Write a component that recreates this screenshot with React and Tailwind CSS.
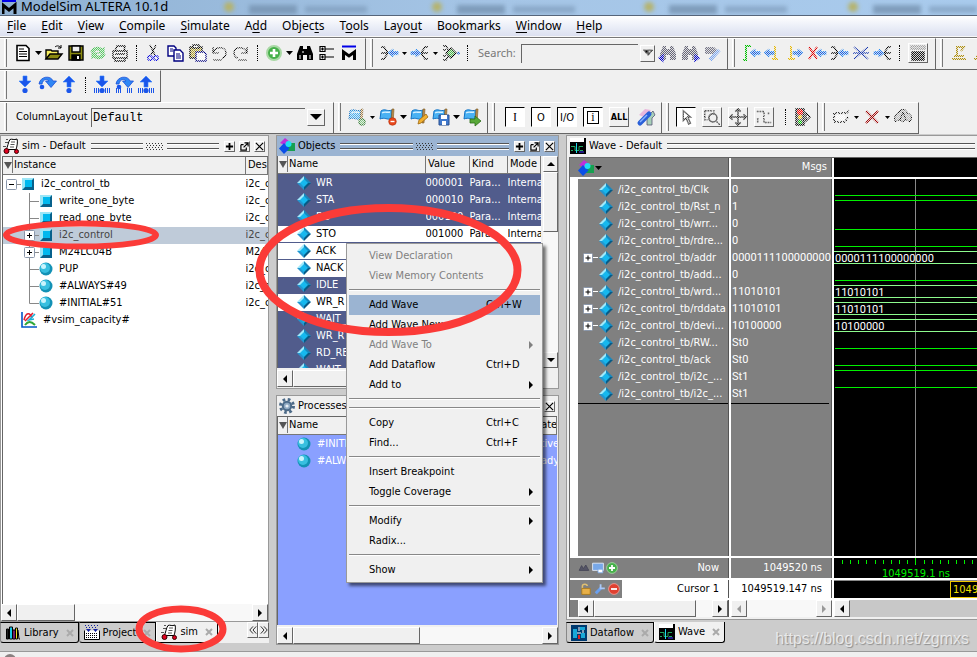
import React, { useState } from 'react';
import clsx from 'clsx';

const BLUE = '#1a5fe0';

/* 20x20 toolbar glyph, dim = disabled (dithered) */
const Ico = ({ children, dim, size = 'size-5' }) => (
  <svg viewBox="0 0 20 20" className={clsx(size, 'shrink-0')} fill="none" stroke="#000" strokeWidth="1.4">
    <g mask={dim ? 'url(#dither)' : undefined}>{children}</g>
  </svg>
);

const Tool = ({ name, children, dim }) => (
  <button type="button" aria-label={name} className="flex w-[22px] shrink-0 items-center justify-center">
    <Ico dim={dim}>{children}</Ico>
  </button>
);

const Drop = ({ small }) => (
  <span className="flex w-[9px] shrink-0 justify-center">
    <svg viewBox="0 0 7 4" className={small ? 'h-[3px] w-[5px]' : 'h-1 w-[7px]'}>
      <path d="M0 0h7L3.5 4z" fill="#000" />
    </svg>
  </span>
);

const Sep = () => <span className="mx-[5px] h-4 shrink-0 border-l border-dotted border-black" />;

const Group = ({ children, className }) => (
  <div className={clsx('flex h-8 shrink-0 items-center border-r border-b border-r-[#666] border-b-[#666] border-t border-t-white pb-0.5 pl-1', className)}>
    <span className="mr-[5px] h-7 w-[3px] shrink-0 border-r border-l border-r-[#777] border-l-white" />
    {children}
  </div>
);

const Square = ({ name, children, down }) => (
  <button
    type="button"
    aria-label={name}
    className={clsx(
      'mr-1.5 flex size-5 shrink-0 items-center justify-center border text-[11px] leading-none',
      down ? 'border-t-black border-l-black border-r-white border-b-white bg-white' : 'border-t-white border-l-white border-r-[#666] border-b-[#666] bg-[#f0f0f0]'
    )}
  >
    {children}
  </button>
);

/* shapes used more than once */
const Arrow = ({ d = 'l', x = 0, y = 0 }) => (
  <path
    transform={`translate(${x} ${y})`}
    d={d === 'l' ? 'M0 4l5-4v2.6h5v3H5V8z' : 'M10 4L5 0v2.6H0v3h5V8z'}
    fill={BLUE}
    stroke="#2f8ff5"
    strokeWidth="1"
  />
);
const Down = () => <path d="M8 1h4v5h4l-6 6-6-6h4z" fill="#1b56ea" stroke="#2f80ff" strokeWidth=".6" />;
const Up = () => <path d="M10 1l6 6h-4v5H8V7H4z" fill="#1b56ea" stroke="#2f80ff" strokeWidth=".6" />;
const Over = () => (
  <g>
    <path d="M2 9C3 1 14 0 16 6h3.500L14 12.500 8.500 6H12C10 3.500 6 4 5 9z" fill="#2f86f4" stroke="#1b4fd8" strokeWidth=".8" />
    <circle cx="5" cy="12" r="2.300" fill="#1b56ea" stroke="none" />
  </g>
);
const Ticks = () => <path d="M2.500 13v5M4.500 13v5M6.500 13v5M13.500 13v5M15.500 13v5M17.500 13v5" stroke="#1b56ea" strokeWidth="1" />;
const Ball = () => <circle cx="10" cy="15.500" r="2.600" fill="#1b56ea" stroke="none" />;
const Flag = () => (
  <g>
    <path d="M3 4c4-3 6 1 11-1l-1 9c-4 1-6-2-11 0z" fill="#49b1f3" stroke="#1272c4" strokeWidth="1" />
    <path d="M4 6c3-2 5 0 8-1" stroke="#d9f1ff" />
    <path d="M14 2h2l-1 14h-2z" fill="#b98b4a" stroke="#7d5a24" strokeWidth=".6" />
  </g>
);
const Binoc = ({ c = '#000' }) => (
  <path d="M5 3h3v3h4V3h3l3 8v6h-6v-5H8v5H2v-6z" fill={c} stroke="none" />
);

const Cube = () => (
  <svg viewBox="0 0 12 12" className="size-3 shrink-0">
    <path d="M0 0h12v12H0z" fill="#9be6f7" />
    <path d="M12 0v12H0l3-3h6V3z" fill="#07618c" />
    <path d="M3 2h7v7H3z" fill="#00b8ee" />
  </svg>
);
const Sphere = () => (
  <svg viewBox="0 0 14 14" className="size-3.5 shrink-0">
    <circle cx="7" cy="7" r="6.500" fill="#1391b5" />
    <circle cx="6" cy="6" r="5" fill="#38bfe0" />
    <circle cx="4.500" cy="4.500" r="2.500" fill="#c9f4fd" />
  </svg>
);
const Diamond = () => (
  <svg viewBox="0 0 16 16" className="size-4 shrink-0">
    <path d="M8 1L1 8h7z" fill="#9fe9fb" />
    <path d="M8 1l7 7H8z" fill="#1787bd" />
    <path d="M1 8l7 7V8z" fill="#2396d0" />
    <path d="M15 8l-7 7V8z" fill="#075b86" />
    <path d="M8 4L12 8 8 12 4 8z" fill="#16b8ee" />
  </svg>
);
const Shapes = () => (
  <svg viewBox="0 0 16 16" className="size-4 shrink-0">
    <path d="M1 5l5-5 5 4-3 4z" fill="#c030d8" />
    <path d="M8 5h8v8H8z" fill="#17a050" />
    <path d="M5 5l5.500 5.500L5 16l-5-5.500z" fill="#0b4fe8" />
    <circle cx="9.500" cy="6" r="3" fill="#1fe0f4" />
  </svg>
);
const SimIcon = () => (
  <svg viewBox="0 0 16 16" className="size-4 shrink-0">
    <path d="M7 1.500c2-1 4 1 7-.5 1 2 0 8-1 10.500H3C5 9 5 4 7 1.500z" fill="#fff" stroke="#000" />
    <path d="M8 4h4M7.500 6.500h4M7 9h4M2 4.500h3M3 1.500h2M0 8.500h3" stroke="#555" />
    <circle cx="3.500" cy="13" r="2.500" fill="#e00020" stroke="#300" />
    <circle cx="13.500" cy="13.500" r="2" fill="#e00020" stroke="#300" />
  </svg>
);
const WaveIcon = () => (
  <svg viewBox="0 0 16 16" className="size-4 shrink-0">
    <path d="M0 0h16v16H0z" fill="#000" />
    <path d="M0 0h14v4H0z" fill="#fff" />
    <path d="M1 8.500h4v4h4v-4h4M1 12.500h2M10 12.500h3" fill="none" stroke="#20a860" />
    <path d="M6.500 5v10" stroke="#20d8f0" />
    <path d="M9 14h5" stroke="#4030ff" />
  </svg>
);
const FlowIcon = () => (
  <svg viewBox="0 0 16 16" className="size-4 shrink-0">
    <path d="M0 0h16v16H0z" fill="#003a70" />
    <path d="M2 4h4v9H2zM9 2h5v3H9zM10 8h4v5h-4z" fill="#18a8d8" />
    <path d="M6 8h4M8 2v4M12 5v3" stroke="#fff" />
    <path d="M7 10h2v4H7z" fill="#e02020" />
  </svg>
);
const BooksIcon = () => (
  <svg viewBox="0 0 16 16" className="size-4 shrink-0" stroke="#000" strokeWidth="1">
    <path d="M1.500 4v10h2V4z" fill="#222" />
    <path d="M4.500 2v12h3V2z" fill="#18c8e8" />
    <path d="M8 5v9h2V5z" fill="#e838c8" />
    <path d="M10.500 3v11h2V3z" fill="#f0e020" />
    <path d="M13 5l1 9h1" fill="none" />
  </svg>
);
const ProjectIcon = () => (
  <svg viewBox="0 0 16 16" className="size-4 shrink-0">
    <path d="M.5 5.500v9h15v-9" fill="#fff" stroke="#000" />
    <path d="M2 8.500h12M2 10.500h12M2 12.500h12" stroke="#000" strokeDasharray="1 1" />
    <path d="M2 4h5L4.500 7zM9 4h5l-2.500 3z" fill="#1020a0" />
    <path d="M1 .5h14M2 2.500h12" stroke="#1020a0" strokeDasharray="1 2" />
  </svg>
);
const GearIcon = () => (
  <svg viewBox="0 0 16 16" className="size-4 shrink-0">
    <circle cx="8" cy="8" r="6.500" fill="none" stroke="#4c6a88" strokeWidth="3" strokeDasharray="2.600 2.500" />
    <circle cx="8" cy="8" r="4.200" fill="#8fa9c2" stroke="#4c6a88" strokeWidth="2" />
    <circle cx="8" cy="8" r="1.600" fill="#e8eef4" />
  </svg>
);

const Plus = () => (
  <svg viewBox="0 0 10 10" className="size-2.5 shrink-0">
    <rect x=".5" y=".5" width="9" height="9" rx="1" fill="#fff" stroke="#8a97ab" />
    <path d="M2.500 5h5M5 2.500v5" stroke="#000" />
  </svg>
);

/* tree connector with an optional expand box */
const Branch = ({ box, root, last }) => (
  <svg viewBox="0 0 17 17" className="size-[17px] shrink-0" fill="none" stroke="#888">
    {!root && <path d={last ? 'M7.500 0v8.500' : 'M7.500 0v17'} />}
    <path d="M7.500 8.500H17" />
    {box && (
      <>
        <rect x="2.500" y="3.500" width="10" height="10" rx="1" fill="#fff" stroke="#8a97ab" />
        <path d={root ? 'M5 8.500h5' : 'M5 8.500h5M7.500 6v5'} stroke="#000" />
      </>
    )}
  </svg>
);

const raised = 'flex shrink-0 items-center justify-center border border-t-white border-l-white border-r-[#666] border-b-[#666] bg-[#f0f0f0]';

const Tri = ({ d, color = '#000' }) => (
  <svg viewBox="0 0 8 8" className="size-2">
    <path d={{ l: 'M6 0v8L2 4z', r: 'M2 0v8l4-4z', u: 'M0 6h8L4 2z', d: 'M0 2h8L4 6z', h: 'M0 1h8L4 8z' }[d]} fill={color} />
  </svg>
);

const HScroll = ({ thumb, off, plain }) => (
  <div className={clsx('flex h-[17px] shrink-0', plain ? 'bg-[#c8c8c8]' : 'bg-[#f8f8f8]')}>
    <button type="button" aria-label="Scroll left" className={clsx(raised, 'w-4')}><Tri d="l" color={off ? '#999' : '#000'} /></button>
    <div className="flex min-w-0 flex-1">
      {thumb && <div className={clsx(raised, thumb)} />}
    </div>
    {!plain && (
      <button type="button" aria-label="Scroll right" className={clsx(raised, 'w-4')}><Tri d="r" color={off ? '#999' : '#000'} /></button>
    )}
  </div>
);

const PanelTitle = ({ icon, title, active, buttons = true }) => (
  <div className={clsx('flex h-5 shrink-0 items-center gap-[3px] pr-0.5 pl-0.5', active ? 'bg-[#9bb4d2]' : 'bg-[#f0f0f0]')}>
    {icon}
    <h2 className="whitespace-nowrap">{title}</h2>
    <div className="ml-0.5 h-1.5 min-w-0 flex-1 border-y border-[#555] shadow-[0_1px_0_#fff,inset_0_1px_0_#fff]" />
    {buttons && (
      <>
        <svg viewBox="0 0 18 7" className="h-[7px] w-[18px] shrink-0">
          <path d="M0 .5h18M1 2.500h18M0 4.500h18M1 6.500h18" stroke="#333" strokeDasharray="1 2" />
        </svg>
        <div className="mr-0.5 h-1.5 min-w-0 flex-1 border-y border-[#555] shadow-[0_1px_0_#fff,inset_0_1px_0_#fff]" />
        {['M5 1v8M1 5h8', 'M1 3v6h6V6M1 3h3M4 6l4.500-4.500M5 1h4v4', 'M1 1l8 8M9 1L1 9'].map((d, i) => (
          <button key={i} type="button" aria-label={['Zoom', 'Undock', 'Close'][i]} className={clsx(raised, 'mr-px size-[11px]')}>
            <svg viewBox="0 0 10 10" className="size-[9px]"><path d={d} fill="none" stroke="#000" strokeWidth={i ? 1.3 : 2} /></svg>
          </button>
        ))}
      </>
    )}
  </div>
);

const th = 'h-[17px] overflow-hidden border-r border-b border-[#777] bg-[#f0f0f0] p-0 pl-0.5 text-left font-normal whitespace-nowrap';
const td = 'h-[17px] overflow-hidden p-0 whitespace-nowrap leading-4';

const NameHead = ({ children }) => (
  <th className="h-[17px] overflow-hidden border-r border-b border-[#777] bg-[#f0f0f0] p-0 text-left font-normal whitespace-nowrap">
    <span className="flex items-center gap-px">
      <span className="flex h-4 w-2.5 shrink-0 items-center justify-center border-r border-[#777]"><Tri d="h" color="#555" /></span>
      {children}
    </span>
  </th>
);

const menus = [
  ['', 'F', 'ile'], ['', 'E', 'dit'], ['', 'V', 'iew'], ['', 'C', 'ompile'], ['', 'S', 'imulate'], ['A', 'd', 'd'],
  ['Objec', 't', 's'], ['T', 'o', 'ols'], ['Layo', 'u', 't'], ['Boo', 'k', 'marks'], ['', 'W', 'indow'], ['', 'H', 'elp'],
];

const tree = [
  { name: 'i2c_control_tb', unit: 'i2c_control_tb', root: true, box: true, icon: <Cube /> },
  { name: 'write_one_byte', unit: 'i2c_control_tb', icon: <Cube /> },
  { name: 'read_one_byte', unit: 'i2c_control_tb', icon: <Cube /> },
  { name: 'i2c_control', unit: 'i2c_control', box: true, icon: <Cube />, sel: true },
  { name: 'M24LC04B', unit: 'M24LC04B', box: true, icon: <Cube /> },
  { name: 'PUP', unit: 'i2c_control_tb', icon: <Sphere /> },
  { name: '#ALWAYS#49', unit: 'i2c_control_tb', icon: <Sphere /> },
  { name: '#INITIAL#51', unit: 'i2c_control_tb', icon: <Sphere />, last: true },
];

const objects = [
  ['WR', '000001'], ['STA', '000010'], ['RD', '000100'], ['STO', '001000', 1], ['ACK', '', 1], ['NACK', '', 1],
  ['IDLE', ''], ['WR_R', '', 1], ['WAIT_', ''], ['WR_R', ''], ['RD_RE', ''], ['WAIT_', ''],
];

const signals = [
  ['/i2c_control_tb/Clk', '0', 'lo'],
  ['/i2c_control_tb/Rst_n', '1', 'hi'],
  ['/i2c_control_tb/wrr...', '0', 'lo'],
  ['/i2c_control_tb/rdre...', '0', 'lo'],
  ['/i2c_control_tb/addr', '0000111100000000', 'bus'],
  ['/i2c_control_tb/add...', '0', 'lo'],
  ['/i2c_control_tb/wrd...', '11010101', 'bus'],
  ['/i2c_control_tb/rddata', '11010101', 'bus'],
  ['/i2c_control_tb/devi...', '10100000', 'bus'],
  ['/i2c_control_tb/RW...', 'St0', 'lo'],
  ['/i2c_control_tb/ack', 'St0', 'lo'],
  ['/i2c_control_tb/i2c_...', 'St1', 'hi'],
  ['/i2c_control_tb/i2c_...', 'St1', 'hi'],
];

const contextMenu = [
  { t: 'View Declaration', off: true }, { t: 'View Memory Contents', off: true }, null,
  { t: 'Add Wave', k: 'Ctrl+W' }, { t: 'Add Wave New' }, { t: 'Add Wave To', off: true, sub: true },
  { t: 'Add Dataflow', k: 'Ctrl+D' }, { t: 'Add to', sub: true }, null, null,
  { t: 'Copy', k: 'Ctrl+C' }, { t: 'Find...', k: 'Ctrl+F' }, null,
  { t: 'Insert Breakpoint' }, { t: 'Toggle Coverage', sub: true }, null,
  { t: 'Modify', sub: true }, { t: 'Radix...' }, null,
  { t: 'Show', sub: true },
];

const TitleBar = () => (
  <header className="relative flex h-4 shrink-0 items-center overflow-hidden border-b border-[#56657a] bg-linear-to-r from-[#8fb1d3] via-[#a5c5e6] to-[#a9cbed]">
    <svg className="absolute inset-0 size-full blur-[2px]" aria-hidden="true">
      {[229, 437, 649, 853].map((x) => (
        <g key={x}>
          <circle cx={x} cy="7" r="5" fill="#b5b36c" />
          <rect x={x + 20} y="5" width="48" height="9" fill="#7592b0" opacity=".8" />
          <rect x={x + 76} y="6" width="62" height="7" fill="#7592b0" opacity=".55" />
        </g>
      ))}
    </svg>
    <svg viewBox="0 0 16 16" className="relative ml-0.5 size-4 shrink-0">
      <path d="M0 0h14v2H0z" fill="#0000e8" />
      <path d="M1 14V5l6 5 6-5v9" fill="none" stroke="#000" strokeWidth="3" />
    </svg>
    <h1 className="relative -mt-1 ml-[3px] text-[13px] leading-4 font-['Noto_Sans',sans-serif]">ModelSim ALTERA 10.1d</h1>
  </header>
);

const Toolbars = () => (
  <div className="shrink-0 border-t border-[#777] bg-[#f0f0f0]">
    <div className="flex overflow-hidden">
      <Group className="pr-[5px]">
        <Tool name="New">
          <path d="M4 2.500h9l3 3v12H4z" fill="#fff" strokeWidth="1.600" />
          <path d="M6 6h5M6 8.500h8M6 11h8M6 13.500h8" strokeWidth="1" />
        </Tool>
        <Drop />
        <Tool name="Open">
          <path d="M2 16V7h5l1 1h6v3" fill="#f8f060" /><path d="M2 16l4-5h12l-4 5z" fill="#8a8a10" /><path d="M11 4c2-2 5-1 6 1m0-3v3h-3" strokeWidth="1" />
        </Tool>
        <Tool name="Save">
          <path d="M3 3h14v14H3z" fill="#8a8a10" /><path d="M6 3h8v6H6z" fill="#f0f0f0" /><path d="M6 12h8v5H6z" fill="#000" /><path d="M11 13h2v3h-2z" fill="#fff" stroke="none" />
        </Tool>
        <Tool name="Reload" dim>
          <path d="M3 9c1-5 8-6 11-3l2-2v6h-6l2-2c-3-2-5-1-6 1zM17 11c-1 5-8 6-11 3l-2 2v-6h6l-2 2c3 2 5 1 6-1z" fill="#5fd06a" stroke="#4cc058" strokeWidth="1" />
        </Tool>
        <Tool name="Print" dim>
          <path d="M5 8l2-5h8l-1 5M3 8h14v7H3zM5 15v3h10v-3M5 11h10" />
        </Tool>
        <Sep />
        <Tool name="Cut" dim>
          <path d="M7 2l5 10M13 2L8 12" /><circle cx="7" cy="15" r="2.200" stroke="#0000e0" /><circle cx="13" cy="15" r="2.200" stroke="#0000e0" />
        </Tool>
        <Tool name="Copy">
          <path d="M3 3h6l2 2v8H3z" fill="#fff" stroke="#000080" /><path d="M9 7h6l3 3v8H9z" fill="#fff" stroke="#000080" /><path d="M5 6h3M5 8h3M11 11h4M11 13h5M11 15h5" stroke="#000080" strokeWidth="1" />
        </Tool>
        <Tool name="Paste" dim>
          <path d="M3 4h12v11H3z" fill="#b0a030" /><path d="M6 2h6v3H6z" fill="#fff" /><path d="M9 9h8l2 2v7H9z" fill="#fff" stroke="#000080" />
        </Tool>
        <Tool name="Undo" dim><path d="M4 4v6h6M4 10c2-7 13-7 13 0 0 3-2 5-4 5M4 17h9" strokeWidth="1.200" /></Tool>
        <Tool name="Redo" dim><path d="M16 4v6h-6M16 10C14 3 3 3 3 10c0 3 2 5 4 5M7 17h9" strokeWidth="1.200" /></Tool>
        <Sep />
        <Tool name="Add">
          <circle cx="10" cy="10" r="7" fill="#46b04a" stroke="#a8d8a4" strokeWidth="2" /><path d="M10 6v8M6 10h8" stroke="#fff" strokeWidth="2.600" />
        </Tool>
        <Drop />
        <Tool name="Find"><Binoc /><path d="M5 12v4M15 12v4M8 8v2" stroke="#fff" strokeWidth="1" /></Tool>
        <Tool name="Collapse all">
          <path d="M3 3.500h5v5H3zM3 11.500h5v5H3zM4 6h3M5.500 4.500v3M4 14h3M5.500 12.500v3M8 6h9M8 14h9" strokeWidth="1.200" />
        </Tool>
        <Tool name="ModelSim"><path d="M3 3.500h14" stroke="#0000e8" strokeWidth="2" /><path d="M4.500 17V9l5.500 4 5.500-4v8" strokeWidth="3" /></Tool>
      </Group>
      <Group className="pr-1">
        <Tool name="Collapse time" dim><path d="M2 4h3l4 6-4 6H2M2 10h7" /><Arrow x={9} y={6} /></Tool>
        <Drop small />
        <Tool name="Expand time" dim><path d="M18 4h-3l-4 6 4 6h3M18 10h-7" /><Arrow d="r" x={1} y={6} /></Tool>
        <Drop small />
        <Tool name="Expand all time" dim><path d="M2 3h3l4 7-4 7H2M2 7h3M2 13h3" /><path d="M5 10l5-5 5 5-5 5z" fill="#48b848" strokeWidth="1.400" /><circle cx="17.500" cy="10" r="1.500" fill={BLUE} stroke="none" /></Tool>
        <Sep />
        <label htmlFor="search" className="ml-[5px] w-[43px] shrink-0 text-[11px] text-[#777] font-['Noto_Sans',sans-serif]">Search:</label>
        <input id="search" className="h-[19px] w-[117px] border-t border-l border-[#666] bg-[#f0f0f0] px-1 outline-none" />
        <button type="button" aria-label="Search history" className={clsx(raised, 'mr-0.5 ml-0.5 h-[17px] w-[15px]')}>
          <Ico dim size="size-3"><path d="M2 5h16l-8 9z" fill="#000" /></Ico>
        </button>
        <Tool name="Find previous" dim><Binoc c="#667" /><path d="M1 15l4-3v6z" fill="#00c" stroke="#00c" /></Tool>
        <Tool name="Find next" dim><Binoc c="#667" /><path d="M19 15l-4-3v6z" fill="#00c" stroke="#00c" /></Tool>
        <Tool name="Search options" dim><path d="M3 4h9l3 3v4H3z" fill="#778" stroke="none" /><path d="M8 17l9-10" stroke="#7aa6f0" strokeWidth="4" /></Tool>
      </Group>
      <Group className="pr-1">
        <Tool name="Insert edge" dim><path d="M2 17h3V3h5" stroke="#00c000" strokeWidth="2" /><Arrow x={9} y={6} /></Tool>
        <Tool name="Previous falling edge" dim><path d="M12 3v13h-3h6" stroke="#e8b800" strokeWidth="2" /><Arrow x={1} y={6} /></Tool>
        <Tool name="Next falling edge" dim><path d="M6 3v13H3h7" stroke="#e8b800" strokeWidth="2" /><Arrow d="r" x={8} y={6} /></Tool>
        <Tool name="Delete cursor" dim><path d="M2 4l8 12M10 4L2 16" stroke="#e00000" strokeWidth="2" /><Arrow x={9} y={6} /></Tool>
        <Tool name="Previous" dim><path d="M2 4h3l4 6-4 6H2M2 10h7" /><Arrow x={9} y={6} /></Tool>
        <Tool name="Both" dim><path d="M3 4l7 6-7 6M17 4l-7 6 7 6M2 10h16" stroke="#1838b0" strokeWidth="1.600" /></Tool>
        <Tool name="Next" dim><path d="M18 4h-3l-4 6 4 6h3M18 10h-7" /><Arrow d="r" x={1} y={6} /></Tool>
        <Sep />
        <button type="button" aria-label="Memory" className={clsx(raised, 'mx-[3px] size-5')}>
          <Ico dim><path d="M3 3h14v3H3z" fill="#bbb" stroke="#999" /><path d="M4 9h12v8H4z" fill="#222" /></Ico>
        </button>
      </Group>
      <Group className="flex-1">
        <Tool name="Step up" dim><path d="M3 16h14M5 13h10M8 3v10M8 4h7l-3 4" stroke="#b09010" strokeWidth="2" /></Tool>
        <Tool name="Step down" dim><path d="M3 16h14M5 13h10M8 3v10" stroke="#b09010" strokeWidth="2" /></Tool>
      </Group>
    </div>
    <div className="flex">
      <Group className="pr-[3px]">
        <span className="w-0.5" />
        <Tool name="Step"><Down /><Ball /></Tool>
        <Tool name="Step over"><Over /></Tool>
        <Tool name="Step out"><Up /><Ball /></Tool>
        <Sep />
        <Tool name="Step current"><Down /><Ball /><Ticks /></Tool>
        <Tool name="Step over current"><Over /><Ticks /></Tool>
        <Tool name="Step out current"><Up /><Ball /><Ticks /></Tool>
      </Group>
    </div>
    <div className="flex overflow-hidden">
      <Group className="w-[334px] pr-2">
        <label htmlFor="layout" className="ml-1 w-[75px] shrink-0">ColumnLayout</label>
        <select id="layout" className="h-[19px] min-w-0 flex-1 appearance-none border-t border-l border-[#666] bg-[#f0f0f0] pl-px text-[12px] font-['Liberation_Mono',monospace] outline-none">
          <option>Default</option>
        </select>
        <button type="button" aria-label="Column layouts" className={clsx(raised, 'ml-0.5 h-[17px] w-[18px]')}>
          <svg viewBox="0 0 12 6" className="h-1.5 w-3"><path d="M0 0h12L6 6z" /></svg>
        </button>
      </Group>
      <Group className="pr-1">
        <Tool name="Bookmark add" dim><Flag /><circle cx="15" cy="15" r="3" fill="#8c8" stroke="#484" /></Tool>
        <Drop small />
        <Tool name="Bookmark delete"><Flag /><circle cx="14.500" cy="14.500" r="3.800" fill="#e8481c" stroke="#b02c08" strokeWidth=".6" /><path d="M12.500 14.500h4" stroke="#fff" /></Tool>
        <Drop />
        <Tool name="Bookmark edit"><Flag /><path d="M9 17l1-4 7-6 2 3-7 6z" fill="#f0b030" stroke="#a06810" strokeWidth=".8" /></Tool>
        <Tool name="Bookmark save"><Flag /><path d="M8 8h10v10H8z" fill="#3f78cc" stroke="#2a5090" strokeWidth="1" /><path d="M10 8h6v4h-6zM11 14h4v4h-4z" fill="#fff" stroke="none" /></Tool>
        <Drop />
        <Tool name="Bookmark go"><Flag /><path d="M8 12h5V9l6 5-6 5v-3H8z" fill="#58a838" stroke="#2c6c18" strokeWidth=".8" /></Tool>
      </Group>
      <Group className="pr-1">
        <span className="w-[5px]" />
        <Square name="Inputs" down><span className="font-['Liberation_Serif',serif] text-[12px]">I</span></Square>
        <Square name="Outputs" down>O</Square>
        <Square name="Inouts" down>I/O</Square>
        <Square name="Internal" down><span className="border border-black px-[3px] font-['Liberation_Serif',serif] text-[12px] leading-[11px]">i</span></Square>
        <Square name="All"><b className="text-[9px]">ALL</b></Square>
        <Tool name="Preferences"><path d="M3 8l6-6 6 1-5 8z" fill="#eab8dc" stroke="none" /><path d="M12 9l5-5 2 4-3 3v7h-5v-7z" fill="#a8d0b8" stroke="#557" strokeWidth=".8" /><path d="M4 16l9-9" stroke="#2a60d8" strokeWidth="5" strokeLinecap="round" /><path d="M4 15l7-7" stroke="#8ab4ff" strokeWidth="1.500" /></Tool>
      </Group>
      <Group className="pr-1">
        <span className="w-0.5" />
        <Square name="Select mode" down><Ico dim size="size-[18px]"><path d="M7 3v11l3-3 3 7 2-1-3-7h3z" strokeWidth="1.500" /></Ico></Square>
        <Square name="Zoom mode"><Ico dim size="size-[18px]"><path d="M2 3h10v3M2 3v10h3M15 15l4 4" strokeWidth="1.700" strokeDasharray="2 1" /><circle cx="11" cy="11" r="4.500" strokeWidth="1.700" /></Ico></Square>
        <Square name="Pan mode"><Ico dim size="size-[18px]"><path d="M10 1v18M1 10h18M7 4l3-3 3 3M7 16l3 3 3-3M4 7l-3 3 3 3M16 7l3 3-3 3" strokeWidth="1.700" /></Ico></Square>
        <Square name="Edit mode"><Ico dim size="size-[18px]"><path d="M2 4h8v12h8M3 11v5M15 5v3" strokeWidth="1.700" strokeDasharray="2 1" /></Ico></Square>
        <Sep />
        <Tool name="Stop drawing" dim><path d="M4 2h8v16H4z" fill="#555" /><circle cx="8" cy="5" r="3" fill="#f00" stroke="none" /><circle cx="8" cy="10" r="2" fill="#fc0" stroke="none" /><circle cx="8" cy="15" r="2" fill="#0c0" stroke="none" /><path d="M14 6l4 4-4 4z" strokeWidth="1.400" /></Tool>
      </Group>
      <Group className="pr-1">
        <Tool name="Edit row" dim><path d="M4 6h12l2-3M3 6v9h11l3-5" strokeWidth="1.600" strokeDasharray="2 1" /><path d="M5 8h9v5H5z" fill="#fff" stroke="none" /></Tool>
        <Drop small />
        <Tool name="Remove" dim><path d="M4 4l12 12M16 4L4 16" stroke="#a00000" strokeWidth="2.400" /></Tool>
        <Drop small />
        <Tool name="Coverage" dim><path d="M6 5c2-4 8-3 8 1 5 1 6 6 2 9-2-3-5-3-6 0-3-3-6-2-7 0-3-3-1-8 3-10z" fill="#bbb" strokeWidth="1" /><path d="M7 13l3-8 3 8" strokeWidth="1" /></Tool>
      </Group>
    </div>
  </div>
);

const Tabs = ({ tabs, current, onPick, children }) => (
  <div role="tablist" className="flex h-[21px] shrink-0">
    {tabs.map((t) => (
      <button
        key={t.name}
        type="button"
        role="tab"
        aria-selected={t.name === current}
        onClick={() => onPick(t.name)}
        className={clsx(
          'flex items-center gap-[3px] rounded-b-[3px] border-r border-b border-l border-black px-1 whitespace-nowrap',
          t.name === current ? 'bg-[#f0f0f0] border-l-white' : 'border-t border-l-[#888] bg-[#ccc]'
        )}
      >
        {t.icon}
        {t.name}
        <svg viewBox="0 0 8 8" className="ml-1 size-2"><path d="M1 1l6 6M7 1L1 7" stroke="#aaa" strokeWidth="2" /></svg>
      </button>
    ))}
    {children}
  </div>
);

const SimPane = () => {
  const [tab, setTab] = useState('sim');
  return (
    <section className="flex w-[269px] shrink-0 flex-col pb-2">
      <div className="flex min-h-0 flex-1 flex-col border border-[#999] bg-white">
        <PanelTitle icon={<SimIcon />} title="sim - Default" />
        <div className="ml-px min-h-0 flex-1 overflow-hidden border-t border-l border-[#666]">
          <table className="w-full table-fixed">
            <thead>
              <tr><NameHead>Instance</NameHead><th className={clsx(th, 'w-[22px]')}>Design unit</th></tr>
            </thead>
            <tbody className="before:block before:h-px">
              {tree.map((r) => (
                <tr key={r.name} className={r.sel ? 'bg-[#bfcbd9] text-[#444]' : ''}>
                  <td className={td}>
                    <div className={clsx('flex h-[17px] items-center', r.root ? 'pl-px' : 'pl-[19px]')}>
                      <Branch box={r.box} root={r.root} last={r.last} />
                      <span className="mr-1.5 flex w-3.5 justify-center">{r.icon}</span>
                      {r.name}
                    </div>
                  </td>
                  <td className={td}>{r.unit}</td>
                </tr>
              ))}
              <tr>
                <td className={td}>
                  <div className="flex h-[17px] items-center gap-1.5 pl-[18px]">
                    <svg viewBox="0 0 16 16" className="size-4 shrink-0" fill="none" strokeWidth="1.600">
                      <path d="M1 0v15h15" stroke="#0058c8" /><path d="M3 8c2-8 6-8 8-2M12 1L4 9" stroke="#e02030" /><path d="M14 2L8 8l5-1" stroke="#18b0d8" /><path d="M4 13c3-4 6-4 10 0" stroke="#30a838" strokeWidth="2" />
                    </svg>
                    #vsim_capacity#
                  </div>
                </td>
                <td />
              </tr>
            </tbody>
          </table>
        </div>
        <HScroll thumb="w-[58px]" />
      </div>
      <Tabs
        current={tab}
        onPick={setTab}
        tabs={[{ name: 'Library', icon: <BooksIcon /> }, { name: 'Project', icon: <ProjectIcon /> }, { name: 'sim', icon: <SimIcon /> }]}
      >
        <div className="flex min-w-0 flex-1 items-start justify-end bg-[#f0f0f0]">
          <button type="button" aria-label="Tabs left" className={clsx(raised, 'h-4 w-[11px]')}><Ico size="size-2"><path d="M10 1l-8 9 8 9M18 1l-8 9 8 9" strokeWidth="2" /></Ico></button>
          <button type="button" aria-label="Tabs right" className={clsx(raised, 'h-4 w-[11px]')}><Ico size="size-2"><path d="M2 1l8 9-8 9M10 1l8 9-8 9" strokeWidth="2" /></Ico></button>
        </div>
      </Tabs>
    </section>
  );
};

const ObjectsPane = () => (
  <div className="flex h-[254px] shrink-0 flex-col border border-[#999] bg-[#f0f0f0]">
    <PanelTitle icon={<Shapes />} title="Objects" active />
    <div className="flex min-h-0 flex-1">
      <div className="min-w-0 flex-1 overflow-hidden border-l border-[#666] bg-[#515c8c]">
        <table className="w-full table-fixed">
          <thead>
            <tr>
              <NameHead>Name</NameHead>
              <th className={clsx(th, 'w-11')}>Value</th>
              <th className={clsx(th, 'w-[38px]')}>Kind</th>
              <th className={clsx(th, 'w-[33px]')}>Mode</th>
            </tr>
          </thead>
          <tbody className="before:block before:h-px">
            {objects.map(([name, value, light], i) => (
              <tr key={i} className={light ? 'border-t border-[#515c8c] bg-white text-black' : 'text-white'}>
                <td className={td}><div className="flex h-4 items-center gap-1 pl-[18px]"><Diamond />{name}</div></td>
                <td className={td}>{value}</td>
                <td className={td}>{value && 'Para...'}</td>
                <td className={td}>{value && 'Internal'}</td>
              </tr>
            ))}
          </tbody>
        </table>
      </div>
      <div className="ml-0.5 flex w-[15px] shrink-0 flex-col bg-[#f8f8f8]">
        <button type="button" aria-label="Scroll up" className={clsx(raised, 'h-4')}><Tri d="u" /></button>
        <div className={clsx(raised, 'h-[60px]')} />
        <div className="flex-1" />
        <button type="button" aria-label="Scroll down" className={clsx(raised, 'h-4')}><Tri d="d" /></button>
      </div>
    </div>
    <div className="mt-0.5 mr-4 mb-px"><HScroll thumb="w-[120px]" /></div>
  </div>
);

const ProcessesPane = () => (
  <div className="flex min-h-0 flex-1 flex-col border border-[#999] bg-[#f0f0f0]">
    <PanelTitle icon={<GearIcon />} title="Processes (Active)" />
    <div className="mr-px min-h-0 flex-1 overflow-hidden border-t border-l border-[#666] bg-[#8aa0ff]">
      <table className="w-full table-fixed">
        <thead>
          <tr><NameHead>Name</NameHead><th className={clsx(th, 'w-7')}>State</th></tr>
        </thead>
        <tbody className="text-white before:block before:h-px">
          {[['#INITIAL#51', 'Active'], ['#ALWAYS#49', 'Ready']].map(([n, s]) => (
            <tr key={n}>
              <td className={td}><div className="flex h-[17px] items-center gap-1.5 pl-[19px]"><Sphere />{n}</div></td>
              <td className={td}>{s}</td>
            </tr>
          ))}
        </tbody>
      </table>
    </div>
    <div className="mt-0.5"><HScroll thumb="w-[127px]" /></div>
  </div>
);

const Signals = () => (
  <svg className="block size-full bg-black text-[11px] font-['Roboto',sans-serif]" aria-label="Waveforms">
    <path d="M81.500 0v2000" stroke="#888" />
    {signals.map(([, value, kind], i) => {
      const y = 2 + i * 17;
      if (kind === 'bus') {
        return (
          <g key={i}>
            <path d={`M0 ${y + 2.5}h2000M0 ${y + 14.5}h2000`} stroke="#8dfb8d" />
            <text x="1" y={y + 13} fill="#fff">{value}</text>
          </g>
        );
      }
      return <path key={i} d={`M1 ${y + (kind === 'hi' ? 2.5 : 14.5)}h2000`} stroke="#00f000" />;
    })}
  </svg>
);

const WavePane = () => {
  const [tab, setTab] = useState('Wave');
  const cell = 'min-w-0 overflow-hidden bg-[#808080] border-r border-[#555]';
  return (
    <section className="flex min-w-0 flex-1 flex-col pb-2">
      <div className="mb-0.5 flex min-h-0 flex-1 flex-col border border-r-0 border-[#999] bg-[#f0f0f0] pb-0.5 pl-px">
        <PanelTitle icon={<WaveIcon />} title="Wave - Default" buttons={false} />
        <div className="mt-px ml-px grid min-h-0 flex-1 grid-cols-[159px_101px_minmax(0,1fr)] grid-rows-[19px_minmax(0,1fr)_20px_18px_17px] gap-x-0.5 gap-y-0.5 border-t border-l border-[#666] bg-white text-white">
          <div className={clsx(cell, 'flex items-center pl-2')}><Shapes /><Drop /></div>
          <div className={clsx(cell, 'pr-1 text-right leading-[18px]')}>Msgs</div>
          <div className="bg-black" />

          <div className={clsx(cell, 'border-l-8 border-l-white pt-0.5')}>
            <ul className="border-b border-black pb-px">
              {signals.map(([name, , kind], i) => (
                <li key={i} className="flex h-[17px] items-center whitespace-nowrap">
                  <span className="flex w-5 shrink-0 items-center justify-end">
                    {kind === 'bus' && <><Plus /><span className="w-[5px] border-t border-white" /></>}
                  </span>
                  <Diamond />
                  <span className="ml-1">{name}</span>
                </li>
              ))}
            </ul>
          </div>
          <div className={clsx(cell, 'pt-0.5')}>
            <ul className="mr-0.5 border-b border-black pb-px pl-px font-['Roboto',sans-serif]">
              {signals.map(([, value], i) => <li key={i} className="h-[17px] leading-[17px]">{value}</li>)}
            </ul>
          </div>
          <div className="min-h-0 overflow-hidden"><Signals /></div>

          <div className={clsx(cell, 'flex items-center gap-0.5 pr-[9px] pl-2')}>
            <Ico size="size-3"><path d="M2 14l4-8 3 5 4-6 5 9z" fill="#556" stroke="#445" /></Ico>
            <Ico size="size-3"><path d="M1 2h18v12H1z" fill="#78a8e8" stroke="#e8f0fc" /><path d="M10 12h8v6h-8z" fill="#fff" stroke="#78a8e8" /></Ico>
            <Ico size="size-3"><circle cx="10" cy="10" r="9" fill="#46b04a" stroke="#a8d8a4" /><path d="M10 5v10M5 10h10" stroke="#fff" strokeWidth="3" /></Ico>
            <span className="ml-auto">Now</span>
          </div>
          <div className={clsx(cell, 'pr-[9px] text-right leading-5')}>1049520 ns</div>
          <svg className="size-full bg-black text-[11px]" aria-label="Time scale">
            {Array.from({ length: 40 }, (_, i) => (
              <path key={i} d={`M${8.5 + Math.round(i * 8.15)} ${i === 9 ? 0 : 2}V${i === 9 ? 7 : 6}`} stroke="#00f000" />
            ))}
            <text x="82" y="19" fill="#00f000" textAnchor="middle">1049519.1 ns</text>
          </svg>

          <div className={clsx(cell, 'flex items-center gap-0.5 pl-2.5')}>
            <Ico size="size-3"><path d="M4 9V5c0-4 8-4 8 0" stroke="#e0c070" strokeWidth="2.500" /><path d="M3 9h14v10H3z" fill="#e8b048" stroke="#a87818" /></Ico>
            <Ico size="size-3"><path d="M3 17l9-9" stroke="#6aa0f0" strokeWidth="5" /><path d="M11 2v7h7" stroke="#a8c8f8" strokeWidth="3" /></Ico>
            <Ico size="size-3"><circle cx="10" cy="10" r="9" fill="#e04030" stroke="#f0a098" /><path d="M5 10h10" stroke="#fff" strokeWidth="3" /></Ico>
            <span className="h-full flex-1 bg-white pr-[9px] text-right leading-[18px] text-black">Cursor 1</span>
          </div>
          <div className={clsx('min-w-0 overflow-hidden border-r border-[#555] bg-white pr-[9px] text-right leading-[18px] text-black')}>1049519.147 ns</div>
          <div className="flex justify-end overflow-hidden border-t border-[#888] bg-black">
            <span className="h-[17px] w-[27px] overflow-hidden border border-r-0 border-[#f0c800] pl-0.5 text-[#f0e000]">1049519.147 ns</span>
          </div>

          <div className={clsx(cell, 'pl-2')}><HScroll thumb="w-[102px]" /></div>
          <HScroll off />
          <HScroll plain />
        </div>
      </div>
      <Tabs
        current={tab}
        onPick={setTab}
        tabs={[{ name: 'Dataflow', icon: <FlowIcon /> }, { name: 'Wave', icon: <WaveIcon /> }]}
      />
    </section>
  );
};

const ContextMenu = () => (
  <div role="menu" className="absolute top-[243px] left-[346px] w-[197px] border border-[#999] bg-[#f0f0f0] p-0.5 shadow-[3px_3px_3px_rgba(0,0,0,0.55)]">
    {contextMenu.map((m, i) =>
      m === null ? (
        <div key={i} className="h-[9px] pt-[3px]"><div className="h-0.5 border-t border-b border-t-[#888] border-b-white" /></div>
      ) : (
        <button
          key={i}
          type="button"
          role="menuitem"
          disabled={m.off}
          className={clsx('flex h-5 w-full items-center pr-[5px] pl-5', m.t === 'Add Wave' && 'bg-[#9bb4d2]', m.off && 'text-[#808080]')}
        >
          {m.t}
          {m.k && <span className="ml-auto w-[49px] text-left">{m.k}</span>}
          {m.sub && <span className="ml-auto"><Tri d="r" color={m.off ? '#808080' : '#000'} /></span>}
        </button>
      )
    )}
  </div>
);

export default function App() {
  return (
    <div className="relative flex h-screen flex-col overflow-hidden bg-[#ccc] text-[11px] leading-4 text-black font-['DejaVu_Sans_Condensed','Noto_Sans',sans-serif]">
      <svg className="absolute size-0" aria-hidden="true">
        <defs>
          <pattern id="dots" width="2" height="2" patternUnits="userSpaceOnUse">
            <path d="M0 0h2v2H0z" fill="#222" />
            <path d="M0 0h1v1H0zM1 1h1v1H1z" fill="#fff" shapeRendering="crispEdges" />
          </pattern>
          <mask id="dither" maskUnits="userSpaceOnUse" x="0" y="0" width="20" height="20">
            <rect width="20" height="20" fill="url(#dots)" />
          </mask>
        </defs>
      </svg>

      <TitleBar />
      <nav className="flex h-[21px] shrink-0 items-center gap-[15px] overflow-hidden border-b border-[#f8f8f8] bg-linear-to-b from-white via-[#eceff8] to-[#dce0f0] pl-[7px] text-[12px] font-['Noto_Sans',sans-serif]">
        {menus.map(([a, b, c]) => (
          <button key={a + b + c} type="button">{a}<u className="underline-offset-2">{b}</u>{c}</button>
        ))}
      </nav>
      <Toolbars />

      <main className="flex min-h-0 flex-1 gap-[7px] pt-px">
        <SimPane />
        <section className="flex w-[283px] shrink-0 flex-col gap-1.5 pb-1.5">
          <ObjectsPane />
          <ProcessesPane />
        </section>
        <WavePane />
      </main>
      <footer className="h-1.5 shrink-0 overflow-hidden border-t border-[#999] bg-[#f0f0f0] pl-1">
        <div className="size-3 translate-y-0.5 rounded-full bg-[#8a8080]" />
      </footer>

      <ContextMenu />

      {/* hand drawn marks */}
      <svg className="pointer-events-none absolute inset-0 size-full" fill="none" stroke="#fb3b38" aria-hidden="true">
        <ellipse cx="81" cy="235" rx="75" ry="11.500" strokeWidth="6" />
        <ellipse cx="388.500" cy="270" rx="129" ry="62" strokeWidth="8" />
        <ellipse cx="181" cy="629" rx="42" ry="20" strokeWidth="7" />
      </svg>
      <p className="pointer-events-none absolute right-2 bottom-2.5 text-[16px] text-white/70 [text-shadow:1px_1px_1px_rgba(0,0,0,0.3)] font-['Liberation_Sans',sans-serif]">https://blog.csdn.net/zgmxs</p>
    </div>
  );
}
